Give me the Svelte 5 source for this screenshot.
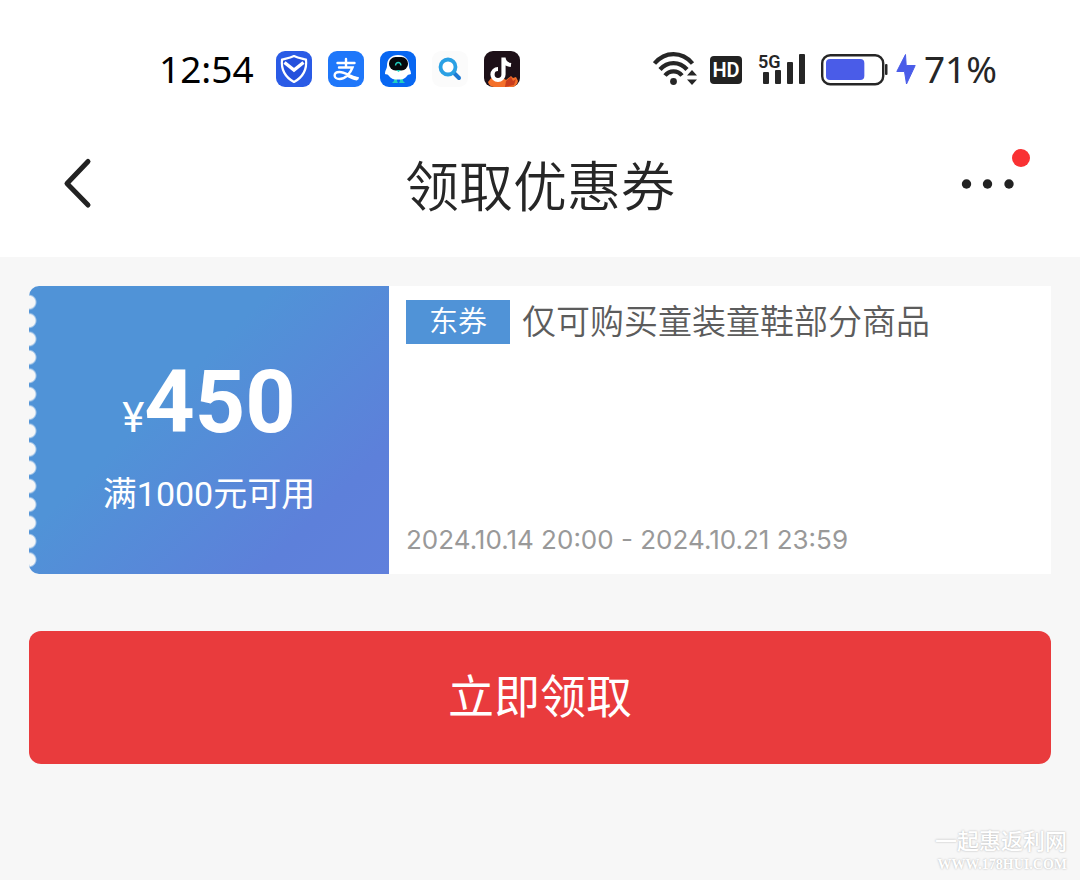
<script lang="ts">
  let claimed = $state(false);

  const coupon = {
    amount: 450,
    condition: '满1000元可用',
    type: '东券',
    title: '仅可购买童装童鞋部分商品',
    period: '2024.10.14 20:00 - 2024.10.21 23:59'
  };

  const battery = 71;

  function claim() {
    claimed = true;
  }
</script>

<div class="page">
  <header class="top">
    <div class="status">
      <div class="status-left">
        <span class="clock">12:54</span>
        <div class="apps">
          <svg viewBox="0 0 36 36" aria-hidden="true">
            <rect width="36" height="36" rx="9" fill="#2a5be6" />
            <path d="M18 5c4 2 8 2.500 12 3.500 1 9-3 17.500-12 22.500C9 26 5 18 6 8.500 10 7.500 14 7 18 5z" fill="#2450dc" stroke="#fff" stroke-width="2.200" stroke-linejoin="round" />
            <path d="M8.500 11.500 18 19l9.500-7.500" fill="none" stroke="#fff" stroke-width="3.400" />
          </svg>
          <svg viewBox="0 0 36 36" aria-hidden="true">
            <rect width="36" height="36" rx="9" fill="#1f77fa" />
            <g fill="none" stroke="#fff" stroke-width="2.400" stroke-linecap="round">
              <path d="M18 8v8M9.500 12h17M11 16.500h13.500C22.500 22 17.500 28 11.500 28c-6.500 0-6.500-7 0-7 6 0 10 4.500 18 6.500" />
            </g>
            <path d="M20 23.500c4 1.500 7 2.200 11 2.500l-2 3.500c-4-.5-7-2.500-11-4z" fill="#fff" />
          </svg>
          <svg viewBox="0 0 36 36" aria-hidden="true">
            <rect width="36" height="36" rx="9" fill="#0867f2" />
            <path d="M14 27h3v3l1 2h-6l2-2zM20 27h3v3l2 2h-6l1-2z" fill="#22cfc0" />
            <path d="M18 4c7 0 11 4 11 11 0 3 2 4 2 8-2 1-3 0-4 2-2 3-5 3.500-9 3.500S11 28 9 25c-1-2-2-1-4-2 0-4 2-5 2-8C7 8 11 4 18 4z" fill="#fff" />
            <rect x="9" y="6" width="19" height="13.500" rx="6.500" fill="#06090d" />
            <path d="M15.500 14.500c.5-4 5-4 5.500 0" fill="none" stroke="#22cfc0" stroke-width="1.400" />
            <path d="M16 19h5l-2.500 2z" fill="#22cfc0" />
          </svg>
          <svg viewBox="0 0 36 36" aria-hidden="true">
            <rect width="36" height="36" rx="9" fill="#fbfbfb" />
            <path d="m21 21 6 6" stroke="#1e78d2" stroke-width="4" stroke-linecap="round" />
            <circle cx="16" cy="16" r="7.500" fill="#fff" stroke="#2aa0e4" stroke-width="3.800" />
          </svg>
          <svg viewBox="0 0 36 36" aria-hidden="true">
            <rect width="36" height="36" rx="9" fill="#1d1018" />
            <path d="M4 31c2-2 3-5 6-5l3 2 5-2 4 3 5-4 2 2 3-1 2 4c-1 4-3 6-7 6H11c-3 0-6-1-7-5z" fill="#f4702a" />
            <path d="m22 30 5-4 2 4 3-2-2 6-9 2z" fill="#c93d1d" />
            <path d="M19.500 6.500v17a5.500 5.500 0 1 1-5.500-5.500M19.500 7c.5 4 3 6.500 7.500 7" fill="none" stroke="#fff" stroke-width="4.200" />
          </svg>
        </div>
      </div>

      <div class="status-right">
        <svg class="wifi" viewBox="0 0 45 36" aria-hidden="true">
          <g fill="none" stroke="#262626" stroke-width="4.200">
            <path d="M1.500 12.500C12 0 29 0 39.500 12.500" />
            <path d="M7 18.500c7.500-8.500 19.500-8.500 27 0" />
            <path d="M12 24.500c4.500-5.500 12.500-5.500 17 0" />
          </g>
          <circle cx="20.500" cy="30.500" r="3.400" fill="#262626" />
          <path d="m39 19 5 5.500H34zM39 34l5-5.500H34z" fill="#262626" />
        </svg>
        <svg class="hd" viewBox="0 0 32 36" aria-hidden="true">
          <rect y="5" width="32" height="28" rx="4" fill="#222" />
          <text x="16" y="26" text-anchor="middle" fill="#fff" font-size="20" font-weight="600">HD</text>
        </svg>
        <svg class="signal" viewBox="0 0 55 36" aria-hidden="true">
          <text x="4" y="17" fill="#262626" font-size="18" font-weight="600">5G</text>
          <g fill="#262626">
            <rect x="9" y="21" width="6" height="12" rx="1" />
            <rect x="21" y="19" width="6" height="14" rx="1" />
            <rect x="33" y="11" width="6" height="22" rx="1" />
            <rect x="45" y="3" width="6" height="30" rx="1" />
          </g>
        </svg>
        <svg class="battery" viewBox="0 0 67 36" aria-hidden="true">
          <rect x="1.200" y="4.200" width="61" height="29" rx="8" fill="none" stroke="#262626" stroke-width="2.400" />
          <rect x="5" y="8" width={battery * 0.54} height="21" rx="4" fill="#4a5ce8" />
          <rect x="64" y="13" width="2.500" height="11" rx="1" fill="#262626" />
        </svg>
        <div class="charge">
          <svg class="bolt" viewBox="0 0 20 36" aria-hidden="true">
            <path d="M9.500 3.500.8 20.500h7.700L10.500 33 19.200 14.500h-9z" fill="#4a5ce8" stroke="#4a5ce8" stroke-linejoin="round" />
          </svg>
          <span>{battery}%</span>
        </div>
      </div>
    </div>

    <nav class="nav">
      <button class="icon-btn" aria-label="返回">
        <svg class="back" viewBox="0 0 36 56">
          <path d="M28 5.500 7 27.500l21 21.500" fill="none" stroke="#222" stroke-width="5" stroke-linecap="round" stroke-linejoin="round" />
        </svg>
      </button>
      <h1>领取优惠券</h1>
      <button class="icon-btn more" aria-label="更多">
        <svg class="dots" viewBox="0 0 60 56" fill="#222">
          <circle cx="6.500" cy="28" r="4.700" />
          <circle cx="27.500" cy="28" r="4.700" />
          <circle cx="49" cy="28" r="4.700" />
        </svg>
        <span class="badge"></span>
      </button>
    </nav>
  </header>

  <main>
    <section class="coupon">
      <div class="value">
        <p class="amount"><span class="yen">¥</span>{coupon.amount}</p>
        <p class="condition">{coupon.condition}</p>
      </div>
      <div class="info">
        <div class="heading">
          <span class="tag">{coupon.type}</span>
          <h2>{coupon.title}</h2>
        </div>
        <p class="period">{coupon.period}</p>
      </div>
    </section>

    <button class="claim" onclick={claim} disabled={claimed}>立即领取</button>
  </main>

  <footer class="mark">
    <span class="mark-name">一起惠返利网</span>
    <span class="mark-url">WWW.178HUI.COM</span>
  </footer>
</div>

<style>
  :global(body) {
    background: #f7f7f7;
  }

  .page {
    min-height: 100vh;
    display: flex;
    flex-direction: column;
    font-family: Roboto, "Noto Sans CJK SC", sans-serif;
    color: #262626;
  }

  h1,
  h2,
  p {
    margin: 0;
    font-weight: 400;
  }

  svg {
    display: block;
    height: 36px;
  }

  .top {
    background: #fff;
    padding-bottom: 27px;
  }

  .status {
    display: flex;
    justify-content: space-between;
    align-items: center;
    height: 138px;
    padding: 0 83px 0 159px;
    font-family: "Noto Sans", sans-serif;
    font-size: 37px;
    line-height: 36px;
  }

  .status-left,
  .status-right,
  .apps,
  .charge {
    display: flex;
    align-items: center;
  }

  .status-left {
    gap: 22px;
  }

  .clock {
    color: #000;
  }

  .apps {
    gap: 16px;
  }

  .apps svg {
    width: 36px;
  }

  .status-right {
    gap: 12px;
  }

  .charge {
    gap: 8px;
    margin-left: -4px;
  }

  .wifi {
    width: 45px;
  }

  .hd {
    width: 32px;
    font-family: Roboto, sans-serif;
  }

  .signal {
    width: 55px;
    font-family: Roboto, sans-serif;
  }

  .battery {
    width: 67px;
  }

  .bolt {
    width: 20px;
  }

  .nav {
    display: grid;
    grid-template-columns: 1fr auto 1fr;
    align-items: center;
    height: 92px;
    padding: 0 60px;
  }

  h1 {
    padding-top: 10px;
    font-size: 54px;
    line-height: 80px;
    font-weight: 350;
  }

  .icon-btn {
    position: relative;
    justify-self: start;
    padding: 0;
    border: none;
    background: none;
    cursor: pointer;
  }

  .more {
    justify-self: end;
  }

  .back {
    width: 36px;
    height: 56px;
  }

  .dots {
    width: 60px;
    height: 56px;
  }

  .badge {
    position: absolute;
    top: -7px;
    right: -10px;
    width: 18px;
    height: 18px;
    border-radius: 50%;
    background: #f93133;
  }

  main {
    padding: 29px;
  }

  .coupon {
    display: flex;
    min-height: 288px;
    background: #fff;
    border-radius: 10px 0 0 10px;
    overflow: hidden;
  }

  .value {
    position: relative;
    flex: 0 0 360px;
    box-sizing: border-box;
    display: flex;
    flex-direction: column;
    align-items: center;
    justify-content: center;
    gap: 8px;
    padding-top: 16px;
    color: #fff;
    background: linear-gradient(135deg, #5093d7 38%, #5d80da 80%, #6080dc);
  }

  /* perforated ticket edge */
  .value::before {
    content: "";
    position: absolute;
    top: 7px;
    bottom: 5px;
    left: 0;
    width: 8px;
    background: radial-gradient(circle at 0 50%, #f7f7f7 6px, transparent 8px) 0 0 / 8px 18px;
    background-repeat: no-repeat round;
  }

  .amount {
    font-size: 88px;
    font-weight: 700;
    line-height: 88px;
  }

  .yen {
    font-size: 42px;
    font-weight: 400;
  }

  .condition {
    font-size: 34px;
    line-height: 48px;
  }

  .info {
    flex: 1;
    display: flex;
    flex-direction: column;
    justify-content: space-between;
    padding: 14px 17px;
  }

  .heading {
    display: flex;
    align-items: center;
    gap: 12px;
  }

  .tag {
    padding: 0 23px;
    font-size: 29px;
    font-weight: 350;
    line-height: 44px;
    color: #fff;
    background: #5093d7;
  }

  h2 {
    font-size: 34px;
    font-weight: 350;
    line-height: 44px;
    color: #5c5c5c;
  }

  .period {
    font-family: Inter, sans-serif;
    font-size: 26px;
    line-height: 40px;
    color: #999;
  }

  .claim {
    display: block;
    width: 100%;
    margin-top: 57px;
    padding: 32px;
    border: none;
    border-radius: 12px;
    background: #e93b3d;
    color: #fff;
    font-family: inherit;
    font-size: 46px;
    line-height: 69px;
    cursor: pointer;
  }

  .mark {
    display: flex;
    flex-direction: column;
    align-items: flex-end;
    margin-top: auto;
    padding: 0 13px 5px;
    color: #fff;
    text-shadow: 0 0 2px #aaa;
  }

  .mark-name {
    font-size: 22px;
    font-weight: 500;
    line-height: 26px;
  }

  .mark-url {
    font-family: "Liberation Serif", serif;
    font-size: 14px;
    font-weight: 700;
    line-height: 20px;
  }
</style>
